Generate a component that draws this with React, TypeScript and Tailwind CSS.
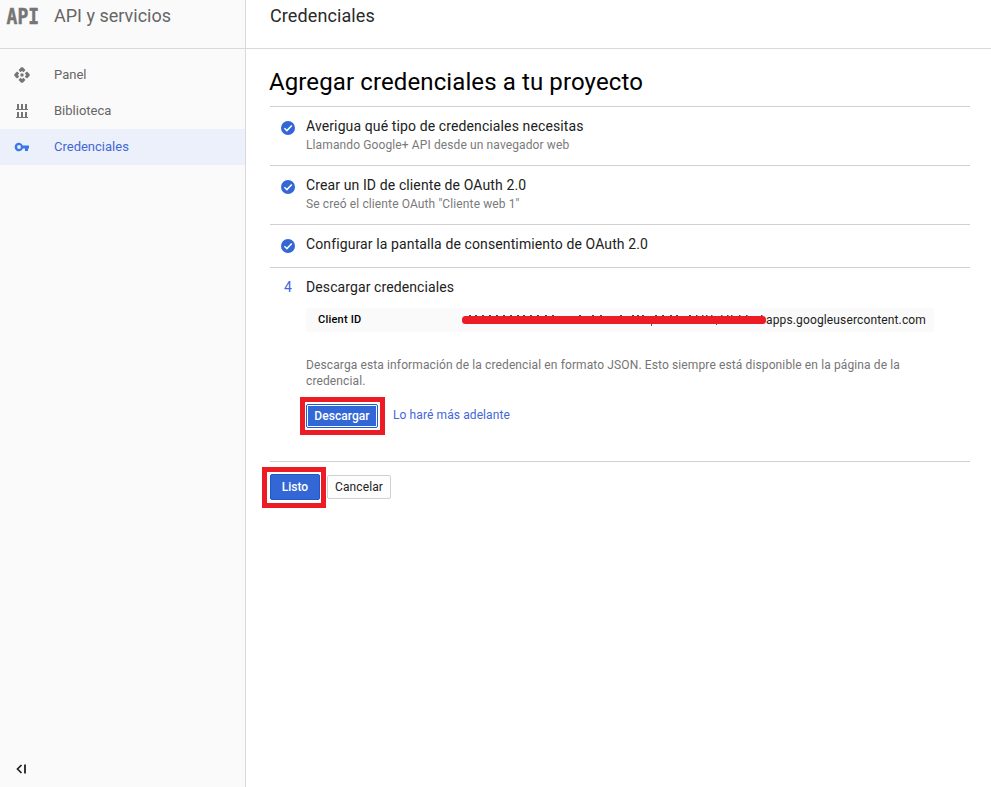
import React from "react";

function CheckIcon() {
  return (
    <svg width="16" height="16" viewBox="0 0 16 16" className="mt-[6px] block">
      <circle cx="8" cy="8" r="7" fill="#3367d6" />
      <path d="M4.4 8.2 6.9 10.6 11.8 5.6" fill="none" stroke="#fff" strokeWidth="1.5" />
    </svg>
  );
}

function PanelIcon() {
  return (
    <svg width="16" height="16" viewBox="0 0 16 16" fill="#757575">
      <circle cx="8" cy="8" r="1.7" />
      <path d="M7.2 0.3H8.8L11.4 3 9.7 5.2 8 3.9 6.3 5.2 4.6 3Z" />
      <path d="M7.2 15.7H8.8L11.4 13 9.7 10.8 8 12.1 6.3 10.8 4.6 13Z" />
      <path d="M0.3 7.2V8.8L3 11.4 5.2 9.7 3.9 8 5.2 6.3 3 4.6Z" />
      <path d="M15.7 7.2V8.8L13 11.4 10.8 9.7 12.1 8 10.8 6.3 13 4.6Z" />
    </svg>
  );
}

function LibraryIcon() {
  return (
    <svg width="16" height="16" viewBox="0 0 16 16" fill="#757575" shapeRendering="crispEdges">
      <path d="M3 1h2v5h2V1h2v5h2V1h2v5h1v1H2V6h1zM3 9h2v5h2V9h2v5h2V9h2v5h1v1H2v-1h1z" />
    </svg>
  );
}

function KeyIcon() {
  return (
    <svg width="16" height="16" viewBox="0 0 16 16" fill="#3b78e7">
      <path
        fillRule="evenodd"
        d="M8.8 6.6A4.2 4.2 0 1 0 8.8 9.4H11V12H14V9.4H15V6.6ZM5 6.1A1.9 1.9 0 1 1 5 9.9A1.9 1.9 0 1 1 5 6.1Z"
      />
    </svg>
  );
}

const nav = [
  { label: "Panel", icon: <PanelIcon />, active: false },
  { label: "Biblioteca", icon: <LibraryIcon />, active: false },
  { label: "Credenciales", icon: <KeyIcon />, active: true },
];

function Sidebar() {
  return (
    <aside className="flex w-[246px] shrink-0 flex-col border-r border-[#d9d9d9] bg-[#fafafa]">
      <div className="flex h-[49px] items-start border-b border-[#d9d9d9] text-[#666]">
        <svg width="54" height="32" viewBox="0 0 54 32" className="shrink-0" fill="#757575" stroke="#757575" strokeWidth="0.5" strokeLinejoin="round">
          <text x="6.6" y="24" fontFamily="DejaVu Sans Mono" fontWeight="700" fontSize="22" textLength="32.5" lengthAdjust="spacingAndGlyphs">API</text>
        </svg>
        <span className="text-[18px] leading-[32px]">API y servicios</span>
      </div>
      <nav className="mt-2 flex flex-col">
        {nav.map((n) => (
          <div
            key={n.label}
            className={`flex h-9 items-center pl-[14px] text-[13px] ${
              n.active ? "bg-[#ebf0fa] text-[#4467d6]" : "text-[#666]"
            }`}
          >
            <span className="w-10">{n.icon}</span>
            <span>{n.label}</span>
          </div>
        ))}
      </nav>
      <svg width="12" height="10" viewBox="0 0 12 10" className="mt-auto mb-[13px] ml-[16px]" fill="none" stroke="#212121">
        <path d="M5.5 1 1.5 5 5.5 9" strokeWidth="1.7" />
        <path d="M9 0.5V9.5" strokeWidth="1.8" />
      </svg>
    </aside>
  );
}

function Step({ title, note, height }: { title: string; note?: string; height: string }) {
  return (
    <div className={`flex border-t border-[#d0d0d0] pt-[7px] pl-[10px] ${height}`}>
      <div className="w-[26px]">
        <CheckIcon />
      </div>
      <div>
        <div className="mt-px text-[14px] leading-[22px] tracking-[0.115px] text-[#212121]">{title}</div>
        {note && <div className="mt-px text-[12px] leading-[15px] tracking-[0.115px] text-[#7a7a7a]">{note}</div>}
      </div>
    </div>
  );
}

// Tops of the characters that stay visible above the redaction stroke.
const tips = [469, 475, 482, 489, 496, 503, 510, 517, 523, 530, 537, 545, 552, 579, 592, 600, 620, 632, 637, 642, 655, 662, 670, 676, 689];
const tallTips = [696, 702, 706, 711, 721, 727, 731, 739, 746, 761];

function Redaction() {
  return (
    <svg width="306" height="16" viewBox="0 0 306 16" className="shrink-0">
      {tips.map((x) => (
        <rect key={x} x={x - 461} y="3" width="2" height="1" fill="#444" />
      ))}
      {tallTips.map((x) => (
        <rect key={x} x={x - 461} y="3" width="1.5" height="1" fill="#444" />
      ))}
      <rect x="190" y="12" width="1" height="2" fill="#555" />
      <rect x="255" y="12" width="1" height="1" fill="#555" />
      <rect x="1" y="4" width="304" height="8" rx="3.5" fill="#ed1c24" />
    </svg>
  );
}

export default function App() {
  return (
    <div className="flex h-[787px] w-[991px] overflow-hidden bg-white font-['Roboto',sans-serif]">
      <Sidebar />
      <div className="flex flex-1 flex-col">
        <header className="h-[49px] border-b border-[#d9d9d9] pl-6 text-[18px] leading-[32px] tracking-[0.1px] text-[#2a2a2a]">Credenciales</header>
        <main className="w-[724px] pl-6">
          <h1 className="-ml-px h-[57px] pt-[17px] text-[24px] leading-[32px] tracking-[0.11px] text-black">Agregar credenciales a tu proyecto</h1>
          <Step title="Averigua qué tipo de credenciales necesitas" note="Llamando Google+ API desde un navegador web" height="h-[59px]" />
          <Step title="Crear un ID de cliente de OAuth 2.0" note={'Se creó el cliente OAuth "Cliente web 1"'} height="h-[59px]" />
          <Step title="Configurar la pantalla de consentimiento de OAuth 2.0" height="h-[43px]" />
          <section className="h-[194px] border-t border-[#d0d0d0] pt-2">
            <div className="flex text-[14px] leading-[22px]">
              <span className="w-9 pl-[14px] text-[#4467d6]">4</span>
              <span className="tracking-[0.1px] text-[#212121]">Descargar credenciales</span>
            </div>
            <div className="mt-[10px] ml-9 flex h-6 w-[628px] items-center bg-[#fafafa] pl-3 text-[12px] text-[#212121]">
              <span className="w-[143px] pt-px text-[11px] font-medium tracking-[0.22px] text-black">Client ID</span>
              <Redaction />
              <span className="-ml-px tracking-[0.14px]">apps.googleusercontent.com</span>
            </div>
            <p className="mt-[25px] ml-9 h-8 w-[610px] text-[12px] leading-4 tracking-[0.118px] text-[#757575]">
              Descarga esta información de la credencial en formato JSON. Esto siempre está disponible en la página de la
              <br />
              credencial.
            </p>
            <div className="mt-2 ml-[30px] flex items-start text-[12px]">
              <div className="h-[38px] w-[85px] border-[5px] border-[#ed1c24] pt-[2px] pl-px">
                <button className="block h-6 w-[72px] rounded-[2px] border border-[#1a5fdc] bg-white p-px font-medium text-white">
                  <span className="block h-5 bg-[#3367d6] leading-[20px] tracking-[0.05px]">Descargar</span>
                </button>
              </div>
              <a className="mt-[10px] ml-2 leading-4 tracking-[0.1px] text-[#4467d6]">Lo haré más adelante</a>
            </div>
          </section>
          <footer className="-ml-2 text-[12px]">
            <div className="ml-2 h-[6px] border-t border-[#d0d0d0]" />
            <div className="flex items-start">
              <div className="h-[41px] w-[64px] border-[5px] border-[#ed1c24] pt-[2px] pl-[3px]">
                <button className="block h-[26px] w-[50px] rounded-[2px] border border-[#1f58c8] bg-[#3367d6] pb-px font-medium text-white">Listo</button>
              </div>
              <button className="mt-2 ml-px h-6 w-[64px] rounded-[2px] border border-[#d0d0d0] bg-[#fdfdfd] tracking-[0.1px] text-[#212121]">Cancelar</button>
            </div>
          </footer>
        </main>
      </div>
    </div>
  );
}
